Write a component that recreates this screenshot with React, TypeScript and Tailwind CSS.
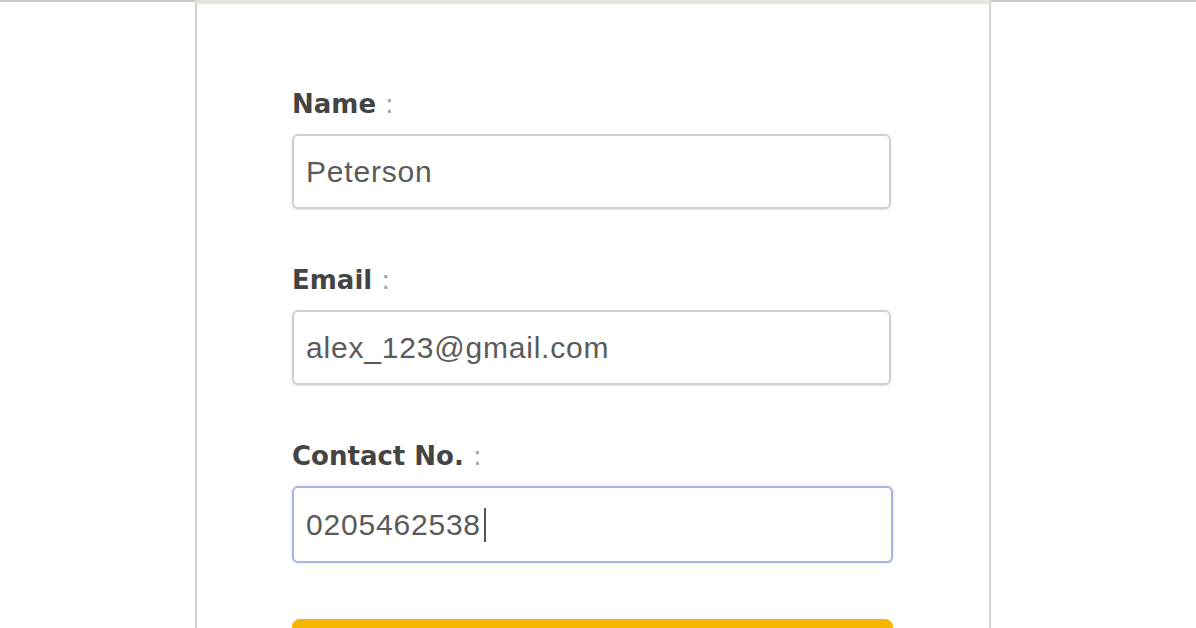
const fields = [
  { label: 'Name', value: 'Peterson' },
  { label: 'Email', value: 'alex_123@gmail.com' },
  { label: 'Contact No.', value: '0205462538', focused: true },
];

function Field({ label, value, focused }: { label: string; value: string; focused?: boolean }) {
  return (
    <div className="flex flex-col">
      <div className="mb-[15px] text-[26px] leading-[30px] font-bold text-[#444] [font-family:'DejaVu_Sans',sans-serif]">
        {label} <span className="font-normal text-[#a0a0a0]">:</span>
      </div>
      <div
        className={
          focused
            ? 'flex h-[77px] w-[601px] items-center rounded-[6px] border-2 border-[#a9b4e2] bg-white pl-3 shadow-[0_0_3px_rgba(120,140,220,0.35)]'
            : 'flex h-[75px] w-[599px] items-center rounded-[6px] border-2 border-[#cfcfcf] bg-white pl-3 shadow-[0_1px_2px_rgba(0,0,0,0.12)]'
        }
      >
        <span className="text-[30px] tracking-[0.8px] text-[#5a5a5a] [font-family:'Liberation_Sans',Arial,sans-serif]">
          {value}
        </span>
        {focused ? <span className="ml-[3px] h-[34px] w-[2px] bg-[#555]" /> : null}
      </div>
    </div>
  );
}

export default function App() {
  return (
    <div className="flex h-[628px] w-full overflow-hidden bg-white">
      <div className="w-[195px] shrink-0 border-t-2 border-[#c9c9c6]" />
      <div className="w-[796px] shrink-0 border-x-2 border-t-4 border-x-[#d2d2d2] border-t-[#e6e6df] pl-[95px] pt-[85px]">
        <div className="flex flex-col gap-[56px]">
          {fields.map((f) => (
            <Field key={f.label} {...f} />
          ))}
          <div className="h-[70px] w-[601px] rounded-[8px] bg-[#f7b500]" />
        </div>
      </div>
      <div className="flex-1 border-t-2 border-[#c9c9c6]" />
    </div>
  );
}
